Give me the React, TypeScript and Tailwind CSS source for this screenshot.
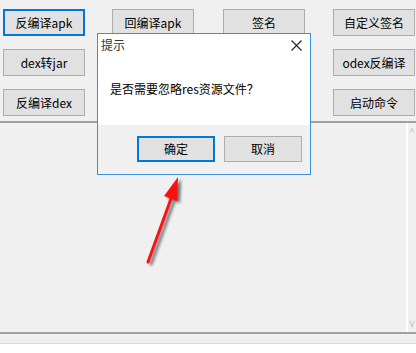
const font = { fontFamily: '"Noto Sans CJK SC", "Noto Sans", sans-serif' };

function Btn({ label, focused }: { label: string; focused?: boolean }) {
  return (
    <div
      className={
        "h-[27px] w-[82px] flex items-center justify-center bg-[#e1e1e1] text-[12px] text-black " +
        (focused ? "border-2 border-[#0078d7]" : "border border-[#adadad]")
      }
    >
      {label}
    </div>
  );
}

export default function App() {
  const rows = [
    ["反编译apk", "回编译apk", "签名", "自定义签名"],
    ["dex转jar", "", "", "odex反编译"],
    ["反编译dex", "", "", "启动命令"],
  ];
  return (
    <div className="relative w-[416px] h-[353px] bg-[#f0f0f0] overflow-hidden" style={font}>
      <div className="flex flex-col gap-[13px] pt-[9px] pl-[3px] h-[121px]">
        {rows.map((r, i) => (
          <div key={i} className="flex">
            {r.map((l, j) => (
              <div key={j} className={j === 0 ? "w-[109px]" : j === 1 ? "w-[111px]" : j === 2 ? "w-[110px]" : "w-[83px]"}>
                {l ? <Btn label={l} focused={i === 0 && j === 0} /> : null}
              </div>
            ))}
          </div>
        ))}
      </div>
      <div className="h-[2px] bg-[#a0a0a0]" />
      <div className="flex h-[209px]">
        <div className="flex-1" />
        <div className="w-[2px] bg-white" />
        <div className="w-[8px] flex flex-col justify-between items-center py-[4px] text-[10px] text-[#c0c0c0] leading-none">
          <span>^</span>
          <span>v</span>
        </div>
      </div>
      <div className="h-[2px] bg-[#a0a0a0]" />
      <div className="h-[9px] bg-[#f0f0f0]" />
      <div className="h-[1px] bg-[#d8d8d8]" />
      <div className="flex-1 h-[20px] bg-white" />

      {/* dialog */}
      <div className="absolute left-[97px] top-[33px] w-[214px] h-[142px] border border-[#3c8fd8] bg-[#f0f0f0] flex flex-col">
        <div className="bg-white h-[91px] flex flex-col">
          <div className="flex items-center justify-between h-[22px] pl-[3px] pr-[8px] text-[12px] text-[#333]">
            <span>提示</span>
            <svg width="11" height="11" viewBox="0 0 11 11">
              <path d="M0.5 0.5 L10.5 10.5 M10.5 0.5 L0.5 10.5" stroke="#222" strokeWidth="1.1" />
            </svg>
          </div>
          <div className="pl-[12px] pt-[24px] text-[12px] text-black">是否需要忽略res资源文件？</div>
        </div>
        <div className="flex pl-[39px] pt-[11px] gap-[9px]">
          <div className="w-[78px] h-[26px] border-2 border-[#0078d7] bg-[#e1e1e1] flex items-center justify-center text-[12px] text-black">确定</div>
          <div className="w-[78px] h-[26px] border border-[#adadad] bg-[#e1e1e1] flex items-center justify-center text-[12px] text-black">取消</div>
        </div>
      </div>

      {/* arrow */}
      <svg className="absolute left-0 top-0" width="416" height="353">
        <defs>
          <filter id="sh" x="-50%" y="-50%" width="200%" height="200%">
            <feGaussianBlur stdDeviation="1.5" />
          </filter>
        </defs>
        <g transform="translate(3,2)" filter="url(#sh)" opacity="0.55">
          <path d="M148 262 L172 196" stroke="#000" strokeWidth="3" strokeLinecap="round" />
          <path d="M178 177 L164 196 L177 201 Z" fill="#000" />
        </g>
        <path d="M148 262 L172 196" stroke="#ff1010" strokeWidth="3" strokeLinecap="round" />
        <path d="M178 177 L164 196 L177 201 Z" fill="#ff1010" />
      </svg>
    </div>
  );
}
